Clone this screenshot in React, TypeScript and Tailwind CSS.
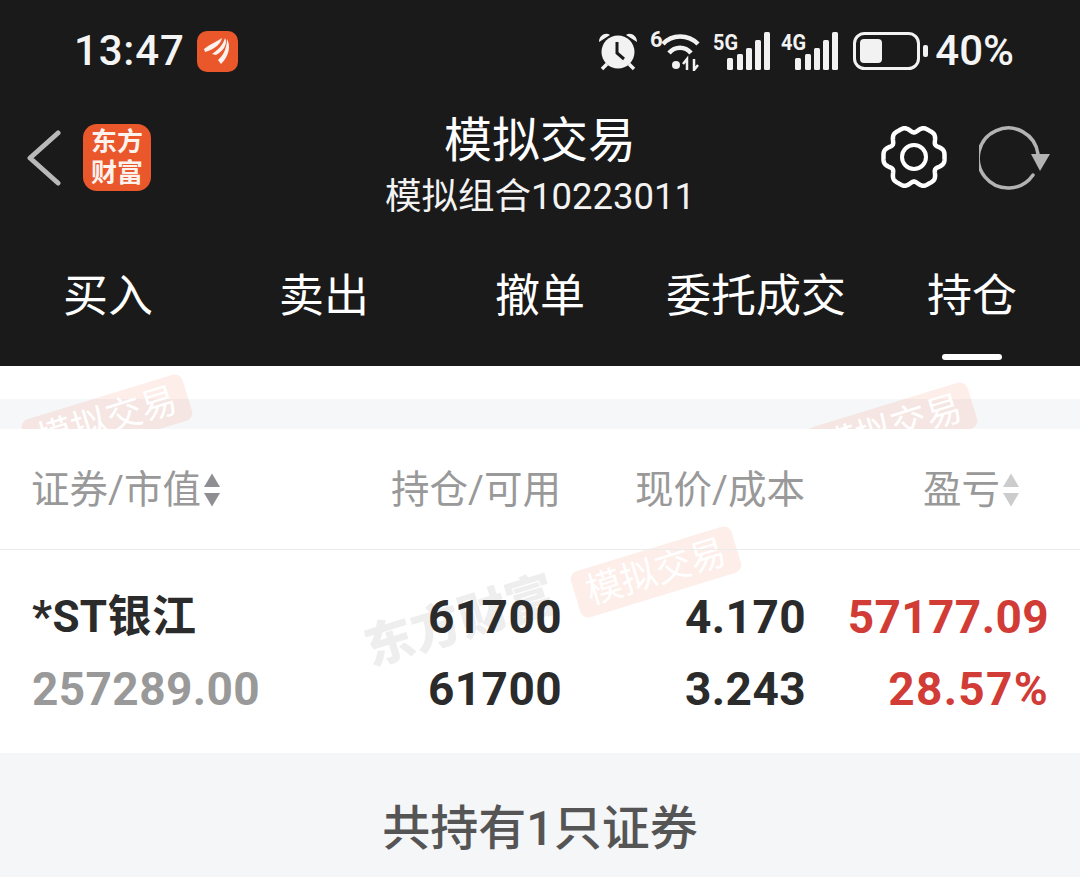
import React from 'react';

const gearPath = (() => {
    const pts: string[] = [];
    for (let i = 0; i < 240; i++) {
        const t = (i / 240) * Math.PI * 2;
        const r = 28.5 + 3 * Math.cos(6 * t) - 1 * Math.cos(12 * t);
        pts.push(`${(33 + r * Math.cos(t)).toFixed(2)} ${(33 + r * Math.sin(t)).toFixed(2)}`);
    }
    return 'M' + pts.join('L') + 'Z';
})();

const SortArrows = ({ color }: { color: string }) => (
    <svg width="18" height="34" viewBox="0 0 18 34" className="ml-[2px] shrink-0">
        <path d="M9 0.5 L17 14 H1 Z" fill={color} />
        <path d="M1 20 H17 L9 33.5 Z" fill={color} />
    </svg>
);

const Signal = ({ label }: { label: string }) => (
    <svg width="58" height="40" viewBox="0 0 58 40">
        <text x="0" y="19" fontSize="22" fontWeight="700" fill="#f2f2f2" fontFamily="Roboto, sans-serif" textLength="25" lengthAdjust="spacingAndGlyphs">{label}</text>
        <rect x="14" y="27" width="6" height="12" rx="1.5" fill="#f2f2f2" />
        <rect x="24" y="23" width="6" height="16" rx="1.5" fill="#f2f2f2" />
        <rect x="33" y="17" width="6" height="22" rx="1.5" fill="#f2f2f2" />
        <rect x="42" y="9" width="6" height="30" rx="1.5" fill="#f2f2f2" />
        <rect x="51" y="1" width="6" height="38" rx="1.5" fill="#f2f2f2" />
    </svg>
);

const StatusBar = () => (
    <div className="flex h-[102px] items-center justify-between pl-[74px] pr-[66px] text-[#f4f4f4]">
        <div className="flex items-center">
            <span className="text-[42px] leading-none font-medium tracking-[0.8px]">13:47</span>
            <div className="ml-[12px] flex h-[41px] w-[41px] items-center justify-center rounded-[10px] bg-[#e9572b]">
                <svg width="32" height="32" viewBox="0 0 32 32" fill="#fdf3ee">
                    <path d="M3 14 C9 9 15 7 21 3 C20 8 15 14 4 17 Z" />
                    <path d="M11 19 C17 15 22 10 24 3 C27 8 23 16 15 20 Z" />
                    <path d="M17 25 C22 21 26 13 26 4 C30 11 28 21 20 29 Z" />
                </svg>
            </div>
        </div>
        <div className="flex items-center">
            <svg width="40" height="40" viewBox="0 0 40 40" fill="#f2f2f2">
                <circle cx="20" cy="21" r="16.5" />
                <path d="M1 11 C1 4 8 1 12 4 Z M39 11 C39 4 32 1 28 4 Z" />
                <path d="M9 33 L4 38 M31 33 L36 38" stroke="#f2f2f2" strokeWidth="3.5" />
                <path d="M19 11 V22 L26 28" stroke="#1a1a1a" strokeWidth="3" fill="none" />
            </svg>
            <svg width="50" height="40" viewBox="0 0 50 40" className="ml-[12px]" fill="none" stroke="#f2f2f2" strokeWidth="4.5">
                <text x="0" y="16" fontSize="22" fontWeight="700" fill="#f2f2f2" stroke="none" fontFamily="Roboto, sans-serif">6</text>
                <path d="M13 13 C22 3 38 3 48 13" />
                <path d="M19 22 C25 15 35 15 41 22" />
                <circle cx="26" cy="34" r="4" fill="#f2f2f2" stroke="none" />
                <path d="M37 39 V28 L33 33 M44 28 V39 L48 34" strokeWidth="2.5" />
            </svg>
            <div className="ml-[13px]"><Signal label="5G" /></div>
            <div className="ml-[10px]"><Signal label="4G" /></div>
            <svg width="75" height="38" viewBox="0 0 75 38" className="ml-[14px]">
                <rect x="1.5" y="1.5" width="64" height="35" rx="10" fill="none" stroke="#f2f2f2" strokeWidth="3" />
                <rect x="7" y="7" width="22" height="24" rx="4" fill="#f2f2f2" />
                <rect x="70" y="13" width="5" height="12" rx="2" fill="#f2f2f2" />
            </svg>
            <span className="ml-[7px] text-[42px] leading-none font-medium">40%</span>
        </div>
    </div>
);

const NavBar = () => (
    <div className="relative flex h-[118px] items-start justify-between pl-[27px] pr-[29px]">
        <div className="flex items-center pt-[22px]">
            <svg width="34" height="56" viewBox="0 0 34 56" fill="none" stroke="#b9b9b9" strokeWidth="5" strokeLinecap="round" strokeLinejoin="round">
                <path d="M31 3 L3 28 L31 53" />
            </svg>
            <div className="ml-[22px] flex h-[67px] w-[68px] flex-col items-center justify-center rounded-[14px] bg-[#e9572b] text-[26px] leading-[31px] font-bold text-[#fdf3ee]">
                <span>东方</span>
                <span>财富</span>
            </div>
        </div>
        <div className="absolute inset-x-0 top-[10px] flex flex-col items-center text-white">
            <span className="text-[48px] leading-[58px]">模拟交易</span>
            <span className="mt-[4px] text-[36.5px] leading-[46px] text-[#f2f2f2]">模拟组合10223011</span>
        </div>
        <div className="flex items-center pt-[22px]">
            <svg width="66" height="66" viewBox="0 0 66 66" fill="none" stroke="#ffffff" strokeWidth="4.5">
                <path d={gearPath} strokeLinejoin="round" />
                <circle cx="33" cy="33" r="12" strokeWidth="4" />
            </svg>
            <svg width="72" height="66" viewBox="0 0 72 66" className="ml-[32px]" fill="none">
                <path d="M54 51 A30 30 0 1 1 59 30" stroke="#b3b3b3" strokeWidth="3.5" strokeLinecap="round" />
                <path d="M52 30 H71 L61 47 Z" fill="#b3b3b3" />
            </svg>
        </div>
    </div>
);

const Tabs = () => (
    <div className="grid h-[146px] grid-cols-5 text-[45px] text-white">
        {['买入', '卖出', '撤单', '委托成交', '持仓'].map((t, i) => (
            <div key={t} className="flex flex-col items-center">
                <span className="mt-[49px] leading-[56px] whitespace-nowrap">{t}</span>
                {i === 4 && <div className="mt-[29px] h-[6px] w-[60px] rounded-full bg-white" />}
            </div>
        ))}
    </div>
);

const Watermark = ({ className }: { className: string }) => (
    <div className={`absolute flex h-[48px] w-[168px] -rotate-[17deg] items-center justify-center rounded-[8px] bg-[#e9572b]/10 text-[36px] leading-none text-white ${className}`}>
        模拟交易
    </div>
);

const cols = ['w-[299px]', 'w-[229px]', 'w-[244px]', 'w-[243px]'];

export default function App() {
    return (
        <div className="h-[877px] w-full overflow-hidden bg-[#f5f6f8] font-['Roboto','Noto_Sans_CJK_SC',sans-serif]">
            <div className="h-[366px] bg-[#1a1a1a]">
                <StatusBar />
                <NavBar />
                <Tabs />
            </div>

            {/* gap band, watermark shows through */}
            <div className="relative h-[63px] overflow-hidden bg-white">
                <div className="mt-[33px] h-[30px] bg-[#f6f7f9]" />
                <Watermark className="left-[23px] top-[30px]" />
                <Watermark className="left-[808px] top-[38px]" />
            </div>

            <div className="relative bg-white">
                <Watermark className="left-[572px] top-[119px]" />
                <div className="absolute left-[362px] top-[168px] -rotate-[17deg] text-[49px] leading-none font-black text-[#eeeeee]">
                    东方财富
                </div>

                <div className="relative flex h-[121px] items-center border-b border-[#ebebeb] pl-[31px] pt-[1px] text-[38.5px] text-[#999999]">
                    <div className="flex w-[301px] items-center">
                        证券/市值
                        <SortArrows color="#8e8e93" />
                    </div>
                    <div className={`${cols[1]} text-right`}>持仓/可用</div>
                    <div className={`${cols[2]} text-right`}>现价/成本</div>
                    <div className={`${cols[3]} flex items-center justify-end pr-[28px]`}>
                        盈亏
                        <SortArrows color="#cccccc" />
                    </div>
                </div>

                <div className="relative flex h-[203px] items-center pl-[34px] pt-[2px] text-[46px] leading-[72px] font-bold tracking-[0.4px] text-[#2b2b2b]">
                    <div className={cols[0]}>
                        <div className="-ml-[2px] text-[44px]">*ST银江</div>
                        <div className="-ml-[2px] text-[#999999]">257289.00</div>
                    </div>
                    <div className={`${cols[1]} text-right`}>
                        <div>61700</div>
                        <div>61700</div>
                    </div>
                    <div className={`${cols[2]} text-right`}>
                        <div>4.170</div>
                        <div>3.243</div>
                    </div>
                    <div className={`${cols[3]} text-right text-[#d13c36]`}>
                        <div>57177.09</div>
                        <div className="tracking-[1.3px]">28.57%</div>
                    </div>
                </div>
            </div>

            <div className="flex h-[124px] items-start justify-center pt-[46px] text-[48px] leading-[60px] font-medium text-[#555555]">
                共持有1只证券
            </div>
        </div>
    );
}
